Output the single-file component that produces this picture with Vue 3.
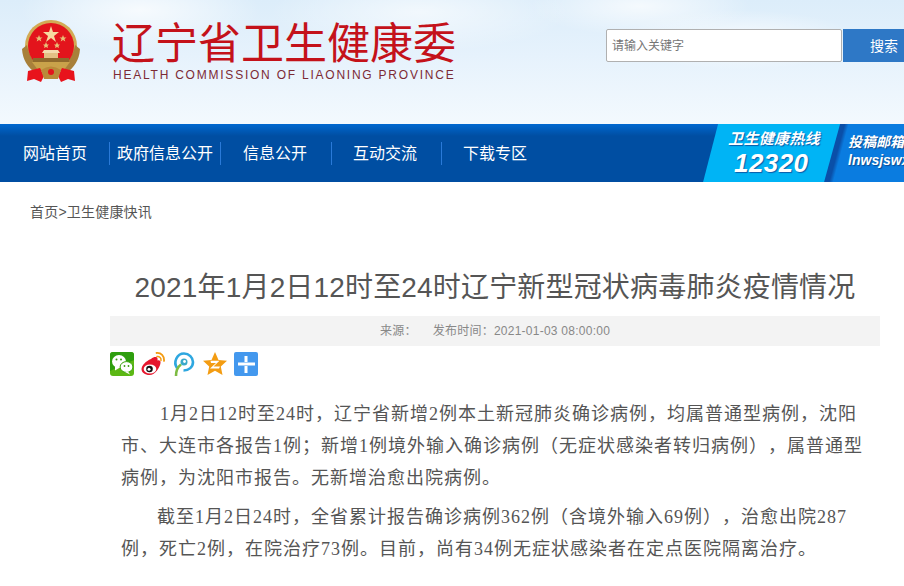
<template>
  <div class="page">
    <!-- header: emblem, site name, search -->
    <header class="top">
      <svg class="emblem" viewBox="0 0 60 64" aria-hidden="true">
        <circle cx="30" cy="27" r="26" fill="#d2ab55" />
        <path d="M1 30 Q2 46 16 55 L24 50 Q9 44 6 26 Z" fill="#a8803a" />
        <path d="M59 30 Q58 46 44 55 L36 50 Q51 44 54 26 Z" fill="#a8803a" />
        <circle cx="30" cy="27" r="23" fill="#e3141c" />
        <polygon points="30,7 32,13 38,13 33,17 35,23 30,19 25,23 27,17 22,13 28,13" fill="#f6d9a0" />
        <polygon points="18,16 19,18.500 21.500,18.500 19.500,20 20.300,22.500 18,21 15.700,22.500 16.500,20 14.500,18.500 17,18.500" fill="#e8c078" />
        <polygon points="42,16 43,18.500 45.500,18.500 43.500,20 44.300,22.500 42,21 39.700,22.500 40.500,20 38.500,18.500 41,18.500" fill="#e8c078" />
        <polygon points="25,23 26,25.500 28,25.500 26.500,27 27,29 25,28 23,29 23.500,27 22,25.500 24,25.500" fill="#e8c078" />
        <polygon points="36,23 37,25.500 39,25.500 37.500,27 38,29 36,28 34,29 34.500,27 33,25.500 35,25.500" fill="#e8c078" />
        <path d="M21 34 H39 L37 31 H23 Z" fill="#f3dcae" />
        <rect x="23" y="34" width="14" height="5" fill="#e2c184" />
        <rect x="12" y="39" width="36" height="4" fill="#8f6a2c" />
        <path d="M11 43 H49 L43 51 H17 Z" fill="#c9a24a" />
        <path d="M7 52 L19 49 L23 57 L20 63 L13 60 L6 62 Z" fill="#e8131c" />
        <path d="M53 52 L41 49 L37 57 L40 63 L47 60 L54 62 Z" fill="#e8131c" />
        <path d="M20 51 Q30 44 40 51 L37 60 H23 Z" fill="#b98a3a" />
        <circle cx="30" cy="53" r="3" fill="#e3141c" />
      </svg>
      <div class="brand">
        <div class="brand-cn">辽宁省卫生健康委</div>
        <div class="brand-en">HEALTH COMMISSION OF LIAONING PROVINCE</div>
      </div>
      <div class="search">
        <div class="search-box">请输入关键字</div>
        <div class="search-btn">搜索</div>
      </div>
    </header>

    <!-- main nav -->
    <nav class="nav">
      <a v-for="item in navItems" :key="item" class="nav-link">{{ item }}</a>
      <div class="hotline">
        <span class="hotline-label">卫生健康热线</span>
        <span class="hotline-num">12320</span>
      </div>
      <div class="mailbox">
        <span class="mailbox-label">投稿邮箱</span>
        <span class="mailbox-addr">lnwsjswx</span>
      </div>
    </nav>

    <div class="crumbs">首页&gt;卫生健康快讯</div>

    <main class="article">
      <h1 class="title">2021年1月2日12时至24时辽宁新型冠状病毒肺炎疫情情况</h1>
      <div class="meta">
        <span>来源：</span>
        <span>发布时间：2021-01-03 08:00:00</span>
      </div>

      <div class="share">
        <!-- wechat -->
        <svg width="24" height="24" viewBox="0 0 24 24" aria-hidden="true">
          <rect width="24" height="24" rx="3" fill="#5cb814" />
          <path d="M0 3a3 3 0 0 1 3-3h18a3 3 0 0 1 3 3v5L0 19Z" fill="#2e9e0e" />
          <ellipse cx="9" cy="9.500" rx="7" ry="6.500" fill="#fff" />
          <path d="M5 14 L5 18.500 L10 15.500 Z" fill="#fff" />
          <ellipse cx="16.500" cy="15" rx="6.400" ry="5.400" fill="#fff" stroke="#3da50f" stroke-width="1" />
          <path d="M18 19.500 L20 22.500 L15 20 Z" fill="#fff" />
          <circle cx="6.500" cy="7.500" r="1" fill="#3a9a10" />
          <circle cx="11" cy="7.500" r="1" fill="#3a9a10" />
          <circle cx="14.500" cy="14" r=".9" fill="#3a9a10" />
          <circle cx="18.500" cy="14" r=".9" fill="#3a9a10" />
        </svg>
        <!-- weibo -->
        <svg width="24" height="24" viewBox="0 0 24 24" aria-hidden="true">
          <path d="M10 7c3-2.500 6-2.500 6.500-.5.3 1-.2 2-.2 2 2-.6 3.700.3 3.200 2.500C19 15 14.500 23 8.500 23 4 23 .5 20.500 .5 17 .5 13.500 5 9 10 7Z" fill="#e6162d" />
          <ellipse cx="9" cy="17" rx="6.300" ry="4.600" fill="#fff" />
          <circle cx="8.500" cy="17" r="3.300" fill="#111" />
          <circle cx="8" cy="17.300" r="1.500" fill="#fff" />
          <path d="M15.500 1C20 .5 23.500 4 23 9" fill="none" stroke="#f39c12" stroke-width="1.800" stroke-linecap="round" />
          <path d="M16 4.500C18.700 4.200 20.300 6 20 8.500" fill="none" stroke="#f39c12" stroke-width="1.500" stroke-linecap="round" />
        </svg>
        <!-- pengyou -->
        <svg width="24" height="24" viewBox="0 0 24 24" aria-hidden="true">
          <path d="M5 16C1 10 5 1.500 12 1.500c5 0 9 4 9 8.500 0 5-4 8.500-9.500 8.500" fill="none" stroke="#2ea7e0" stroke-width="2.600" />
          <circle cx="12" cy="10" r="3.500" fill="#3aa9c9" />
          <circle cx="12.500" cy="9.500" r="1.400" fill="#fff" />
          <path d="M4 24C4 20 5.500 15 9 12.500" fill="none" stroke="#7dbb42" stroke-width="2.600" />
        </svg>
        <!-- qzone -->
        <svg width="24" height="24" viewBox="0 0 24 24" aria-hidden="true">
          <polygon points="12,0 15.500,8 24,8.800 17.800,14.500 19.500,23 12,18.700 4.500,23 6.200,14.500 0,8.800 8.500,8" fill="#f39c12" />
          <path d="M7.500 8.800H16.500L10.500 14.500H17L16 16.500H7L13 11H8Z" fill="#fff" />
        </svg>
        <!-- more -->
        <svg width="24" height="24" viewBox="0 0 24 24" aria-hidden="true">
          <rect width="24" height="24" rx="2" fill="#4398ee" />
          <rect x="4" y="10.500" width="17" height="3" fill="#fff" />
          <rect x="10.500" y="4" width="3" height="6" fill="#fff" />
          <rect x="10.500" y="14" width="3" height="7" fill="#fff" />
        </svg>
      </div>

      <div class="content">
        <p>1月2日12时至24时，辽宁省新增2例本土新冠肺炎确诊病例，均属普通型病例，沈阳市、大连市各报告1例；新增1例境外输入确诊病例（无症状感染者转归病例），属普通型病例，为沈阳市报告。无新增治愈出院病例。</p>
        <p>截至1月2日24时，全省累计报告确诊病例362例（含境外输入69例），治愈出院287例，死亡2例，在院治疗73例。目前，尚有34例无症状感染者在定点医院隔离治疗。</p>
      </div>
    </main>
  </div>
</template>

<script setup>
const navItems = ['网站首页', '政府信息公开', '信息公开', '互动交流', '下载专区']
</script>

<style>
html, body {
  margin: 0;
  height: 100%;
  overflow: hidden;
  background: #fff;
}
</style>

<style scoped>
.page {
  width: 904px;
  font-family: "Liberation Sans", "Noto Sans CJK SC", sans-serif;
  color: #333;
  text-spacing-trim: space-all;
}

.top {
  height: 124px;
  box-sizing: border-box;
  padding: 19px 0 0 21px;
  display: flex;
  align-items: flex-start;
  background:
    radial-gradient(ellipse 120px 40px at 140px 10px, rgba(255,255,255,.75), transparent),
    radial-gradient(ellipse 150px 40px at 420px 12px, rgba(255,255,255,.6), transparent),
    radial-gradient(ellipse 110px 30px at 640px 6px, rgba(255,255,255,.7), transparent),
    radial-gradient(ellipse 120px 30px at 740px 40px, rgba(255,255,255,.7), transparent),
    linear-gradient(180deg, #dcedfa 0%, #e6f2fc 45%, #f3f9fe 100%);
}

.emblem {
  width: 60px;
  height: 64px;
  flex: none;
}

.brand {
  margin-left: 31px;
  width: 360px;
}

.brand-cn {
  font-size: 43px;
  line-height: 50px;
  color: #c4121a;
  white-space: nowrap;
}

.brand-en {
  margin-left: 1px;
  margin-top: -1px;
  font-size: 12px;
  line-height: 14px;
  letter-spacing: 1.770px;
  color: #7c2a35;
  white-space: nowrap;
}

.search {
  margin: 10px 0 0 142px;
  display: flex;
  flex: none;
}

.search-box {
  width: 236px;
  height: 33px;
  box-sizing: border-box;
  padding-left: 5px;
  border: 1px solid #b0b0b0;
  border-radius: 2px;
  background: #fff;
  font-size: 12px;
  line-height: 33px;
  color: #757575;
}

.search-btn {
  width: 61px;
  height: 33px;
  margin-left: 1px;
  padding-left: 27px;
  box-sizing: border-box;
  background: #2e78c6;
  color: #fff;
  font-size: 14px;
  line-height: 34px;
  white-space: nowrap;
}

.nav {
  height: 58px;
  display: flex;
  align-items: center;
  background: linear-gradient(180deg, #0068d0 0, #004ea2 12px, #004ea2 100%);
  overflow: hidden;
}

.nav-link {
  padding: 0 24px 0 21px;
  height: 23px;
  line-height: 23px;
  font-size: 16px;
  color: #fff;
  white-space: nowrap;
  border-right: 1px solid #2a7ad8;
}

.nav-link:first-child {
  padding: 0 22px 0 23px;
}

.nav-link:nth-child(2) {
  padding: 0 7px 0 7px;
  margin-right: 1px;
}

.nav-link:nth-child(5) {
  border-right: 0;
}

.hotline {
  margin-left: 152px;
  width: 138px;
  height: 58px;
  flex: none;
  box-sizing: border-box;
  padding: 6px 0 0 25px;
  display: flex;
  flex-direction: column;
  background: #00b4f5;
  clip-path: polygon(15px 0, 100% 0, 122px 100%, 0 100%);
  color: #fff;
  font-style: italic;
  text-shadow: 1px 1px 1px #0a5aa8;
}

.hotline-label {
  font-size: 15px;
  line-height: 18px;
  font-weight: 700;
  letter-spacing: .3px;
  white-space: nowrap;
}

.hotline-num {
  margin-left: 6px;
  font-size: 26px;
  line-height: 30px;
  font-weight: 700;
  letter-spacing: .4px;
}

.mailbox {
  margin-left: -17px;
  width: 200px;
  height: 58px;
  flex: none;
  box-sizing: border-box;
  padding: 9px 0 0 24px;
  display: flex;
  flex-direction: column;
  background: linear-gradient(105deg, #0a4fa8 0, #0a4fa8 20px, #0a7ce0 24px);
  clip-path: polygon(16px 0, 100% 0, 100% 100%, 0 100%);
  color: #fff;
  text-shadow: 1px 1px 1px #0a4a90;
}

.mailbox-label {
  font-size: 14px;
  line-height: 19px;
  font-weight: 700;
  font-style: italic;
  white-space: nowrap;
}

.mailbox-addr {
  font-size: 14px;
  line-height: 16px;
  font-weight: 700;
  font-style: italic;
}

.crumbs {
  padding: 20px 0 0 30px;
  font-size: 14px;
  line-height: 20px;
  letter-spacing: .2px;
  color: #555;
}

.article {
  margin: 0 24px 0 110px;
}

.title {
  margin: 46px 0 0;
  font-size: 28px;
  line-height: 40px;
  font-weight: 400;
  letter-spacing: .17px;
  color: #555;
  text-align: center;
  white-space: nowrap;
}

.meta {
  margin-top: 8px;
  height: 30px;
  display: flex;
  justify-content: center;
  gap: 16px;
  background: #f3f3f3;
  font-size: 12px;
  line-height: 30px;
  letter-spacing: .25px;
  color: #888;
}

.share {
  display: flex;
  gap: 7px;
  margin-top: 6px;
  height: 24px;
}

.content {
  margin-top: 22px;
  padding: 0 11px;
  font-family: "Liberation Serif", "Noto Sans CJK SC", serif;
  font-size: 18px;
  line-height: 32px;
  letter-spacing: 1px;
  color: #555;
}

.content p {
  margin: 0 0 7px;
  text-indent: 36px;
}

.content p:first-child {
  text-indent: 39px;
}
</style>
